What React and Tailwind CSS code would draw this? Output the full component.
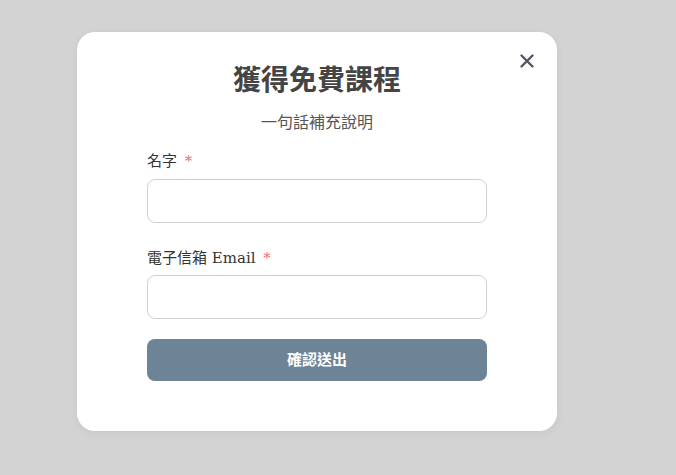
export default function App() {
  const serif = { fontFamily: '"DejaVu Serif", "Noto Sans CJK TC", serif' };
  return (
    <div className="w-[676px] h-[475px] bg-[#d3d3d3] pt-[32px] pl-[77px]" style={serif}>
      <div className="relative w-[480px] h-[399px] bg-white rounded-[18px] px-[70px] pt-[31px] shadow-[0_2px_8px_rgba(0,0,0,0.06)]">
        <button className="absolute right-[20px] top-[19px] w-[20px] h-[20px] flex items-center justify-center text-[#4f5862]">
          <svg width="16" height="16" viewBox="0 0 16 16" fill="none" stroke="currentColor" strokeWidth="2.4" strokeLinecap="round">
            <path d="M2.5 2.5 L13.5 13.5 M13.5 2.5 L2.5 13.5" />
          </svg>
        </button>
        <h1 className="text-center text-[28px] leading-[36px] font-bold text-[#444]">獲得免費課程</h1>
        <p className="mt-[12px] text-center text-[16px] leading-[24px] text-[#555]">一句話補充說明</p>
        <label className="block mt-[15px] text-[15px] leading-[22px] text-[#333]">
          名字 <span className="ml-[3px] text-[#e8707a]">*</span>
        </label>
        <div className="mt-[7px] h-[44px] border border-[#d0d0d0] rounded-[8px]"></div>
        <label className="block mt-[24px] text-[15px] leading-[22px] text-[#333]">
          電子信箱 Email <span className="ml-[3px] text-[#e8707a]">*</span>
        </label>
        <div className="mt-[6px] h-[44px] border border-[#d0d0d0] rounded-[8px]"></div>
        <button className="mt-[20px] w-full h-[42px] rounded-[8px] bg-[#6d8496] text-white text-[15px] font-bold">確認送出</button>
      </div>
    </div>
  );
}
